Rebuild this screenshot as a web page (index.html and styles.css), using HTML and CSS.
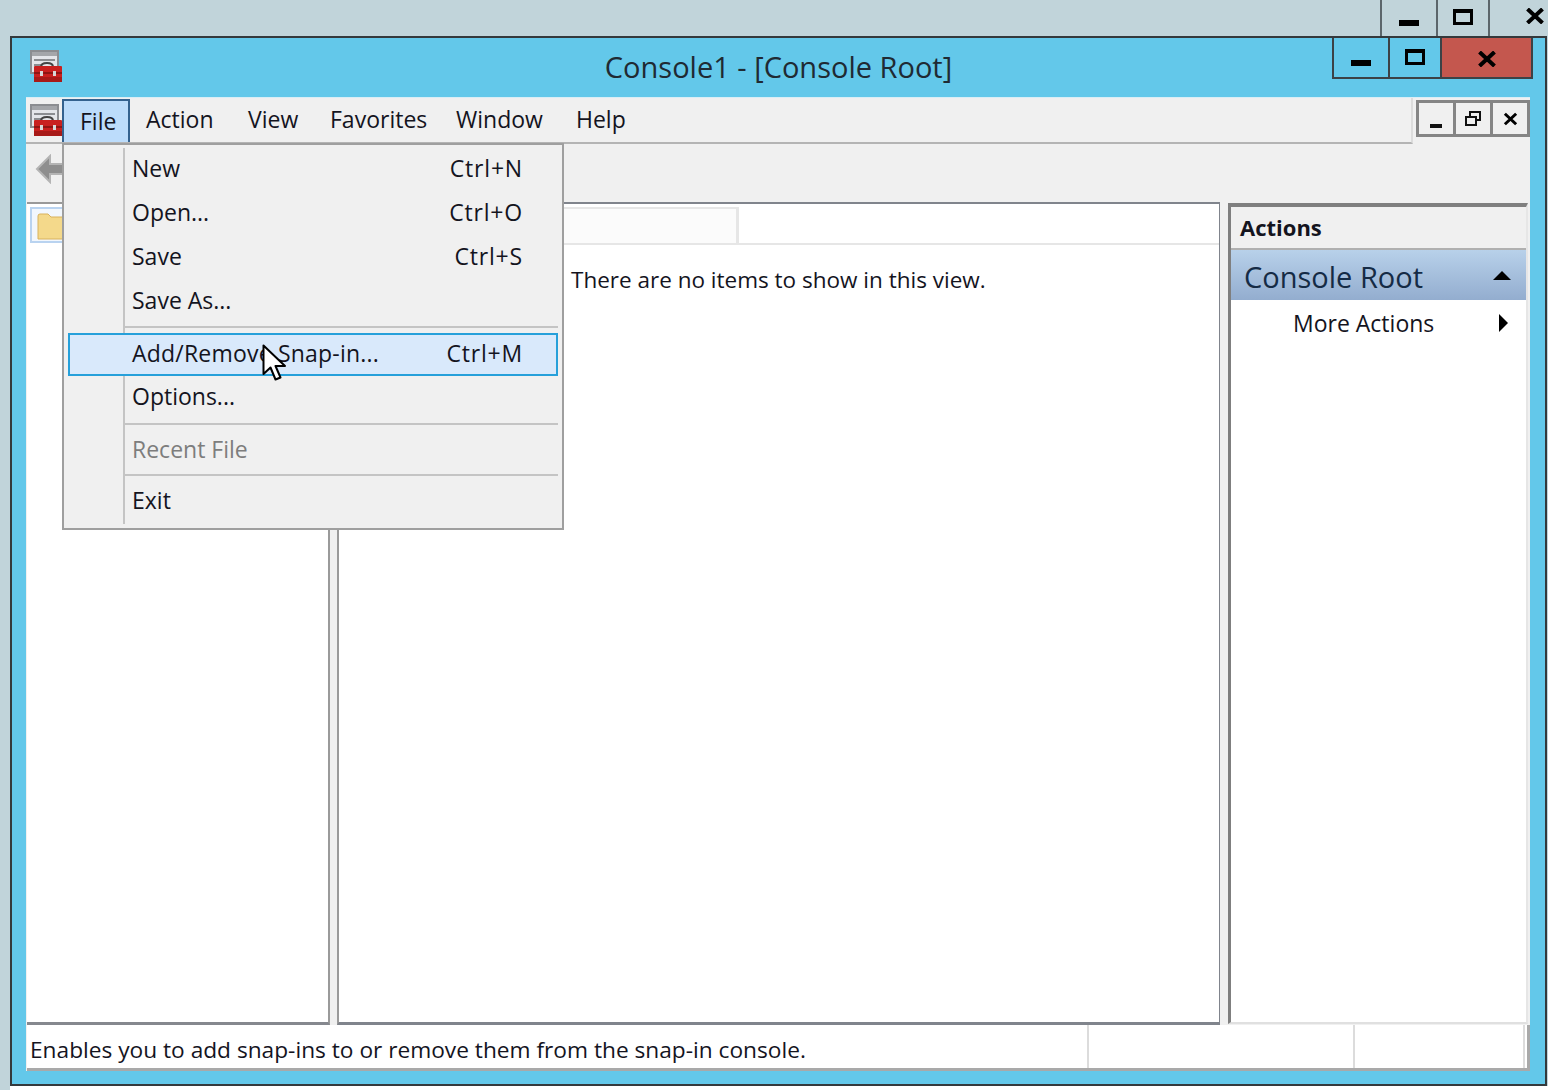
FILE: index.html
```html
<!DOCTYPE html>
<html lang="en">
<head>
  <meta charset="UTF-8">
  <title>Console1 - [Console Root]</title>
  <link rel="stylesheet" href="styles.css">
</head>
<body>
  <svg class="defs" width="0" height="0">
    <symbol id="app-icon" viewBox="0 0 32 32">
      <rect x="1" y="1" width="27" height="22" fill="#e4e6ea" stroke="#8b8d91" stroke-width="2"/>
      <rect x="2" y="2" width="25" height="4" fill="#a4a6aa"/>
      <rect x="4" y="9" width="21" height="2" fill="#8b8d91"/>
      <rect x="4" y="14" width="8" height="2" fill="#8b8d91"/>
      <path d="M11 17 q0 -4 6 -4 q6 0 6 4" fill="none" stroke="#444" stroke-width="2"/>
      <rect x="4" y="16" width="28" height="16" rx="1" fill="#c9201f"/>
      <rect x="4" y="27" width="28" height="5" fill="#a81a18"/>
      <rect x="4" y="22" width="28" height="2" fill="#8f1513"/>
      <rect x="10" y="21" width="3" height="5" fill="#d8d8d8"/>
      <rect x="23" y="21" width="3" height="5" fill="#d8d8d8"/>
    </symbol>
    <symbol id="x-glyph" viewBox="0 0 20 16">
      <path d="M2.500 1 17.500 15M17.500 1 2.500 15" fill="none" stroke="#000" stroke-width="4"/>
    </symbol>
  </svg>

  <div class="back-window">
    <div class="back-buttons">
      <div class="back-btn back-min"><span class="glyph-min"></span></div>
      <div class="back-btn back-max"><span class="glyph-max"></span></div>
      <div class="back-btn back-close"><svg width="20" height="16"><use href="#x-glyph"/></svg></div>
    </div>
  </div>

  <div class="window">
    <div class="titlebar">
      <svg class="title-icon" width="32" height="32"><use href="#app-icon"/></svg>
      <div class="title-text">Console1 - [Console Root]</div>
      <div class="caption-buttons">
        <div class="cap-btn cap-min"><span class="glyph-min"></span></div>
        <div class="cap-btn cap-max"><span class="glyph-max"></span></div>
        <div class="cap-btn cap-close"><svg width="20" height="16"><use href="#x-glyph"/></svg></div>
      </div>
    </div>

    <div class="client">
      <div class="menubar">
        <div class="menu-left">
          <svg class="menu-icon" width="32" height="32"><use href="#app-icon"/></svg>
          <div class="menu-item active">File</div>
          <div class="menu-item item-action">Action</div>
          <div class="menu-item item-view">View</div>
          <div class="menu-item item-fav">Favorites</div>
          <div class="menu-item item-window">Window</div>
          <div class="menu-item">Help</div>
        </div>
        <div class="mdi-buttons">
          <div class="mdi-btn"><span class="mdi-min"></span></div>
          <div class="mdi-btn">
            <svg width="16" height="16" viewBox="0 0 16 16" fill="none" stroke="#111" stroke-width="2"><path d="M5 5V1h10v8h-4"/><rect x="1" y="6" width="10" height="8"/></svg>
          </div>
          <div class="mdi-btn"><svg width="15" height="14"><use href="#x-glyph"/></svg></div>
        </div>
      </div>

      <div class="toolbar">
        <svg class="back-arrow" width="30" height="30" viewBox="0 0 30 30"><path d="M2 15 15 2v8h15v10H15v8z" fill="#8e8e8e" stroke="#b4b4b4" stroke-width="2"/></svg>
      </div>

      <div class="panes">
        <div class="pane tree-pane">
          <div class="tree-row">
            <svg width="30" height="30" viewBox="0 0 30 30"><path d="M1 6q0-2 2-2h8l3 3h16v22H1z" fill="#f4d98b" stroke="#d9b25c"/></svg>
          </div>
        </div>
        <div class="pane list-pane">
          <div class="list-head"><div class="list-col"></div></div>
          <div class="list-empty">There are no items to show in this view.</div>
        </div>
        <div class="pane actions-pane">
          <div class="actions-head">Actions</div>
          <div class="actions-group">
            <span class="group-name">Console Root</span>
            <span class="tri-up"></span>
          </div>
          <div class="actions-row">
            <span>More Actions</span>
            <span class="tri-right"></span>
          </div>
        </div>
      </div>

      <div class="statusbar">
        <div class="status-main">Enables you to add snap-ins to or remove them from the snap-in console.</div>
        <div class="status-cell"></div>
        <div class="status-cell status-last"></div>
      </div>
    </div>

    <div class="file-menu">
      <div class="gutter"></div>
      <div class="drop-row"><span>New</span><span class="key">Ctrl+N</span></div>
      <div class="drop-row"><span>Open...</span><span class="key">Ctrl+O</span></div>
      <div class="drop-row"><span>Save</span><span class="key">Ctrl+S</span></div>
      <div class="drop-row"><span>Save As...</span></div>
      <div class="drop-sep sep-first"></div>
      <div class="drop-row hot"><span class="hot-label">Add/Remove Snap-in...</span><span class="key">Ctrl+M</span></div>
      <div class="drop-row raised"><span>Options...</span></div>
      <div class="drop-sep"></div>
      <div class="drop-row disabled"><span>Recent File</span></div>
      <div class="drop-sep"></div>
      <div class="drop-row"><span>Exit</span></div>
    </div>

    <svg class="cursor" width="26" height="40" viewBox="0 0 26 40"><path d="M1.500 1.500V30l7-6.500 5 12 5-2-5-11.500h9.500z" fill="#fff" stroke="#000" stroke-width="2" stroke-linejoin="round"/></svg>
  </div>
  <div class="bottom-strip"></div>
</body>
</html>
```

FILE: styles.css
```css
* {
  box-sizing: border-box;
}

html, body {
  margin: 0;
  height: 1090px;
  overflow: hidden;
}

body {
  background-color: #c1d4da;
  font-family: "Open Sans", "Noto Sans", sans-serif;
  font-size: 23px;
  color: #14141e;
}

.defs {
  position: absolute;
}

/* window behind, only its caption shows */
.back-window {
  height: 36px;
  display: flex;
  justify-content: flex-end;
}

.back-buttons {
  display: flex;
  width: 168px;
}

.back-btn {
  border-left: 2px solid #5c666b;
  display: flex;
  align-items: center;
  justify-content: center;
}

.back-min { width: 56px; }
.back-max { width: 52px; }
.back-close { width: 60px; padding: 0 0 4px 32px; }

.glyph-min {
  display: block;
  width: 20px;
  height: 6px;
  margin-top: 10px;
  background-color: #000;
}

.glyph-max {
  display: block;
  width: 20px;
  height: 16px;
  border: 3px solid #000;
  border-top-width: 4px;
  margin-top: -2px;
}

/* main window */
.window {
  position: relative;
  margin-left: 10px;
  width: 1537px;
  height: 1050px;
  border: 2px solid #34393c;
  background-color: #63c8ea;
}

.titlebar {
  display: grid;
  grid-template-columns: 1fr auto 1fr;
  height: 59px;
}

.title-icon {
  margin: 12px 0 0 18px;
}

.title-text {
  font-size: 29px;
  line-height: 58px;
  color: #1f2a33;
}

.caption-buttons {
  justify-self: end;
  display: flex;
  height: 41px;
  margin-right: 12px;
  border: 2px solid #3c4246;
  border-top: none;
}

.cap-btn {
  display: flex;
  align-items: center;
  justify-content: center;
}

.cap-min { width: 56px; border-right: 2px solid #3c4246; }
.cap-max { width: 52px; border-right: 2px solid #3c4246; }
.cap-close { width: 89px; padding-top: 2px; background-color: #c4574e; }

.client {
  margin: 0 15px 0 14px;
  height: 974px;
  background-color: #f0f0f0;
  display: flex;
  flex-direction: column;
}

/* menu bar */
.menubar {
  height: 48px;
  display: flex;
  justify-content: space-between;
  border-top: 1px solid #d9eef6;
}

.menu-left {
  width: 1387px;
  display: flex;
  align-items: flex-start;
  border-bottom: 2px solid #b4b4b4;
  border-right: 2px solid #dcdcdc;
  height: 46px;
}

.menu-icon {
  margin: 6px 0 0 4px;
  flex: none;
  width: 32px;
}

.menu-item {
  height: 43px;
  line-height: 40px;
  padding: 0 16px;
  margin-top: 1px;
  white-space: nowrap;
}

.menu-item.active {
  width: 68px;
  padding: 0 0 0 16px;
  background-color: #bcdcfb;
  border: 2px solid #34628f;
  border-bottom: none;
}

.item-action { width: 102px; }
.item-view { width: 82px; }
.item-fav { width: 126px; }
.item-window { width: 120px; }

.mdi-buttons {
  display: flex;
  width: 114px;
  height: 37px;
  margin-top: 2px;
  border: 3px solid #858585;
}

.mdi-btn {
  flex: 1;
  display: flex;
  align-items: center;
  justify-content: center;
  border-right: 3px solid #858585;
}

.mdi-btn:last-child {
  border-right: none;
}

.mdi-min {
  width: 12px;
  height: 4px;
  margin-top: 14px;
  background-color: #111;
}

.toolbar {
  height: 57px;
  padding: 9px 0 0 9px;
}

/* three panes */
.panes {
  height: 823px;
  display: flex;
  padding: 0 0 0 1px;
}

.pane {
  background-color: #fff;
  height: 100%;
}

.tree-pane {
  width: 303px;
  border-top: 2px solid #999;
  border-right: 2px solid #9a9a9a;
  border-bottom: 3px solid #85888e;
  padding: 3px 0 0 3px;
}

.tree-row {
  height: 36px;
  padding: 1px 0 0 5px;
  background-color: #f2f7fd;
  border: 2px solid #b9d3f0;
}

.list-pane {
  width: 883px;
  margin-left: 7px;
  border-left: 2px solid #9a9a9a;
  border-top: 2px solid #80848c;
  border-bottom: 3px solid #80848c;
  border-right: 1px solid #80848c;
}

.list-head {
  height: 41px;
  padding-top: 3px;
  border-bottom: 2px solid #e6e6e6;
}

.list-col {
  width: 400px;
  height: 36px;
  background-color: #fbfbfb;
  border-right: 3px solid #e6e6e6;
  border-top: 2px solid #e6e6e6;
}

.list-empty {
  padding: 18px 0 0 232px;
  line-height: 34px;
  font-size: 22.500px;
}

.actions-pane {
  width: 300px;
  height: 821px;
  margin: 1px 0 0 8px;
  border-top: 4px solid #7f7f7f;
  border-left: 3px solid #7f7f7f;
  border-bottom: 2px solid #e0e0e0;
  border-right: 2px solid #e6e6e6;
}

.actions-head {
  height: 43px;
  padding-left: 9px;
  background-color: #f0f0f0;
  font-weight: bold;
  font-size: 22px;
  line-height: 41px;
  border-bottom: 2px solid #b0b0b0;
}

.actions-group {
  height: 50px;
  display: flex;
  align-items: center;
  justify-content: space-between;
  padding: 0 15px 0 13px;
  font-size: 29px;
  color: #152b45;
  background: linear-gradient(#b8d1ea, #93adcf);
}

.group-name {
  padding-top: 3px;
}

.tri-up {
  width: 0;
  height: 0;
  border-left: 9px solid transparent;
  border-right: 9px solid transparent;
  border-bottom: 9px solid #000;
}

.actions-row {
  height: 46px;
  display: flex;
  align-items: center;
  justify-content: space-between;
  padding: 0 18px 0 62px;
}

.tri-right {
  width: 0;
  height: 0;
  border-top: 9px solid transparent;
  border-bottom: 9px solid transparent;
  border-left: 9px solid #000;
}

/* status bar */
.statusbar {
  height: 46px;
  margin-left: 1px;
  display: flex;
  background-color: #fff;
  border-bottom: 3px solid #a9a9a9;
  border-right: 3px solid #a9a9a9;
}

.status-main {
  width: 1062px;
  padding-left: 3px;
  font-size: 22.700px;
  line-height: 49px;
  white-space: nowrap;
  border-right: 2px solid #dcdcdc;
}

.status-cell {
  width: 266px;
  border-right: 2px solid #dcdcdc;
}

.status-last {
  width: 170px;
}

/* open File menu */
.file-menu {
  position: absolute;
  left: 50px;
  top: 105px;
  width: 502px;
  height: 387px;
  padding: 2px 4px 0 4px;
  background-color: #f0f0f0;
  border: 2px solid #9f9f9f;
}

.gutter {
  position: absolute;
  left: 59px;
  top: 3px;
  bottom: 4px;
  width: 2px;
  background-color: #c4c4c4;
}

.drop-row {
  position: relative;
  height: 44px;
  display: flex;
  align-items: center;
  justify-content: space-between;
  padding: 0 35px 2px 64px;
}

.key {
  letter-spacing: 0.800px;
}

.drop-row.hot {
  height: 43px;
  border: 2px solid #26a0da;
  background-color: #d9e9fb;
  padding: 0 33px 4px 62px;
}

.hot-label {
  letter-spacing: 0.200px;
}

.drop-row.raised {
  padding-bottom: 4px;
}

.drop-row.disabled {
  height: 43px;
  color: #7d7d7d;
}

.drop-sep {
  height: 2px;
  margin: 3px 0 3px 56px;
  background-color: #c4c4c4;
}

.sep-first {
  margin-bottom: 5px;
}

.cursor {
  position: absolute;
  left: 250px;
  top: 306px;
}

.bottom-strip {
  height: 4px;
  margin-left: 10px;
  background-color: #fff;
}
```
